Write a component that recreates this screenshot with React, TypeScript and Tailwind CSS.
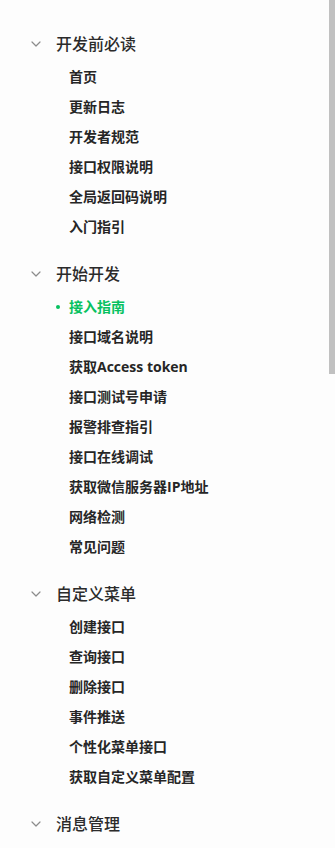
import React from 'react';

type Section = { title: string; items: string[]; active?: string };

const sections: Section[] = [
  {
    title: '开发前必读',
    items: ['首页', '更新日志', '开发者规范', '接口权限说明', '全局返回码说明', '入门指引'],
  },
  {
    title: '开始开发',
    active: '接入指南',
    items: [
      '接入指南',
      '接口域名说明',
      '获取Access token',
      '接口测试号申请',
      '报警排查指引',
      '接口在线调试',
      '获取微信服务器IP地址',
      '网络检测',
      '常见问题',
    ],
  },
  {
    title: '自定义菜单',
    items: ['创建接口', '查询接口', '删除接口', '事件推送', '个性化菜单接口', '获取自定义菜单配置'],
  },
  { title: '消息管理', items: [] },
];

function Chevron() {
  return (
    <svg width="10" height="6" viewBox="0 0 10 6" fill="none" className="shrink-0">
      <path d="M1 1l4 4 4-4" stroke="#8c8c8c" strokeWidth="1.2" strokeLinecap="round" strokeLinejoin="round" />
    </svg>
  );
}

export default function App() {
  return (
    <div
      className="flex w-[335px] h-[848px] overflow-hidden bg-[#fdfdfd] text-[#333]"
      style={{ fontFamily: '"Open Sans", "Noto Sans CJK SC", sans-serif' }}
    >
      <nav className="flex-1 pt-[26px] flex flex-col gap-[14px]">
        {sections.map((section) => (
          <div key={section.title} className="flex flex-col">
            {/* group header */}
            <div className="h-[36px] flex items-center pl-[31px]">
              <Chevron />
              <span className="ml-[15px] text-[16px] leading-none font-medium text-[#2b2b2b]">
                {section.title}
              </span>
            </div>
            {section.items.map((item) => {
              const isActive = item === section.active;
              return (
                <div key={item} className="h-[30px] flex items-center pl-[56px]">
                  <span className="w-[13px] flex items-center">
                    {isActive && <span className="block w-[4px] h-[4px] rounded-full bg-[#07c160]" />}
                  </span>
                  <span
                    className={`text-[14px] leading-none font-bold ${
                      isActive ? 'text-[#07c160]' : 'text-[#262626]'
                    }`}
                  >
                    {item}
                  </span>
                </div>
              );
            })}
          </div>
        ))}
      </nav>
      {/* scrollbar */}
      <div className="w-[6px] h-full">
        <div className="w-full h-[374px] bg-[#c1c1c1]" />
      </div>
    </div>
  );
}
